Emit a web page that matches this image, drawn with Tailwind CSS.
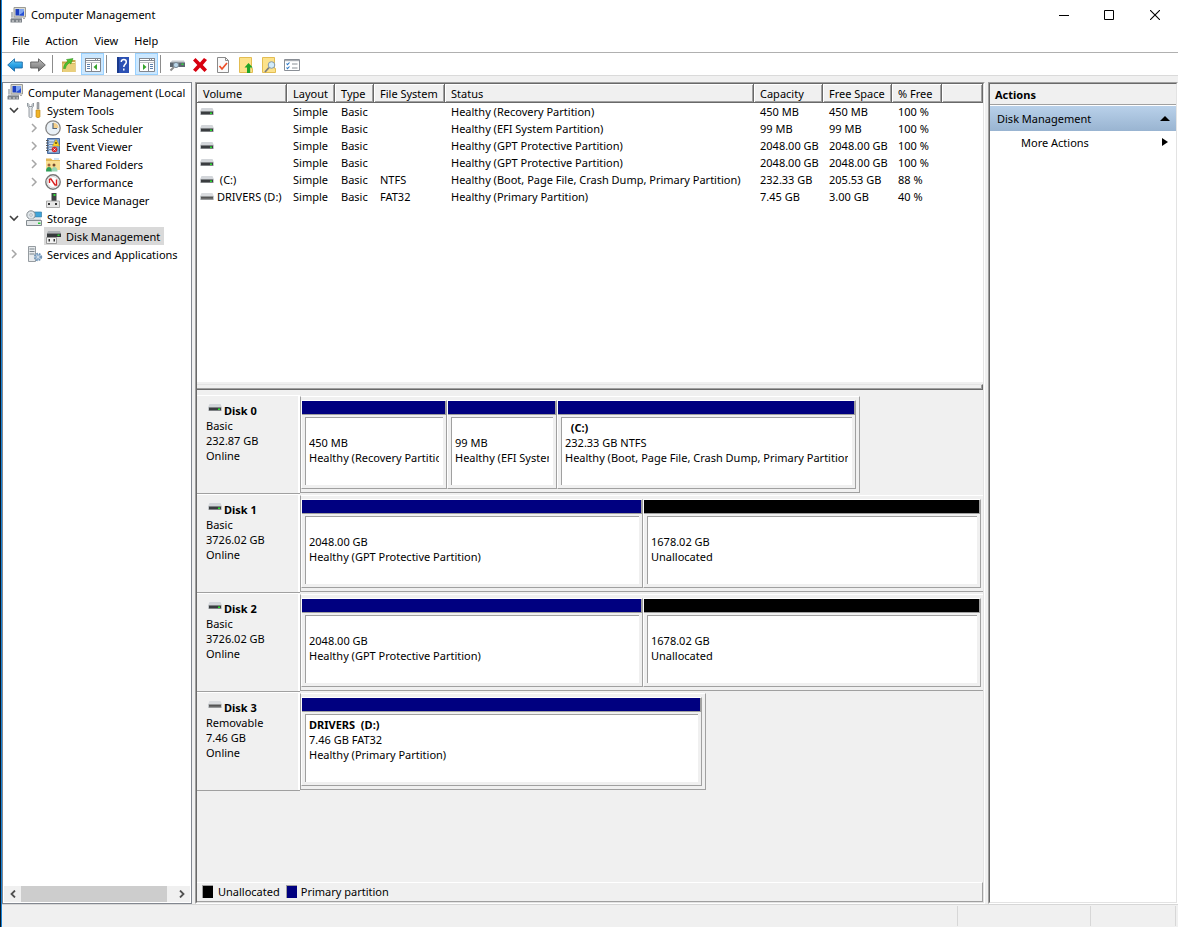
<!DOCTYPE html>
<html lang="en">
<head>
<meta charset="utf-8">
<meta name="viewport" content="width=device-width, initial-scale=1">
<title>Computer Management</title>
<script src="https://cdn.jsdelivr.net/npm/@tailwindcss/browser@4"></script>
</head>
<body class="h-screen overflow-hidden border-l border-[#0a1622] bg-[#f0f0f0] font-['Noto_Sans','Open_Sans',sans-serif] text-[11px] leading-[15px] text-black">

<svg class="absolute h-0 w-0" aria-hidden="true">
  <defs>
    <linearGradient id="blueArrow" x1="0" y1="0" x2="0" y2="1"><stop offset="0" stop-color="#7fd4f7"/><stop offset=".5" stop-color="#2ba3e6"/><stop offset="1" stop-color="#1879c4"/></linearGradient>
    <linearGradient id="greyArrow" x1="0" y1="0" x2="0" y2="1"><stop offset="0" stop-color="#c0c0c0"/><stop offset="1" stop-color="#6e6e6e"/></linearGradient>
    <symbol id="computer" viewBox="0 0 16 16">
      <path d="M4 .5h11.500v9.500H4z" fill="#dcdcd2" stroke="#9a9a94"/><path d="M5.500 2h8.500v6.500H5.500z" fill="#1c3fc0"/><path d="M9 2h5v3.500L9 8z" fill="#7fa4f0"/><path d="M10 8.500 14 4v4.500z" fill="#2450d8"/>
      <path d="M1 5h2v5H1z" fill="#b8bcc0"/><path d="M1 10.500h11v2H1z" fill="#a4a9ae"/><path d="M.5 12h11.500v3.500H.5z" fill="#7c8288"/><path d="M2 13.500h2v1H2zm4 0h2v1H6zm3.500 0h1.500v1H9.500z" fill="#e4e4e4"/><path d="M13 11h2v1h-2z" fill="#aaa"/>
    </symbol>
    <symbol id="drive" viewBox="0 0 14 8"><path d="M1.500 0h11L14 3.500H0z" fill="#d3d6da"/><path d="M0 3h14v4H0z" fill="#c3c7ca"/><path d="M1 3.500h12v3H1z" fill="#3a3d40"/><path d="M10 4.500h2v1.500h-2z" fill="#27e02d"/></symbol>
    <symbol id="removable" viewBox="0 0 14 8"><path d="M1.500 0h11L14 3.500H0z" fill="#dadcdf"/><path d="M0 3h14v4H0z" fill="#c3c7ca"/><path d="M1 3.500h12v3H1z" fill="#6b6b6b"/><path d="M1 4h12v1H1z" fill="#555"/></symbol>
    <symbol id="chevR" viewBox="0 0 8 10"><path d="M2 1l4 4-4 4" fill="none" stroke="#a6a6a6" stroke-width="1.500"/></symbol>
    <symbol id="chevD" viewBox="0 0 10 8"><path d="M1 2l4 4 4-4" fill="none" stroke="#404040" stroke-width="1.600"/></symbol>
  </defs>
</svg>

<div class="flex h-full flex-col border-l border-[#1883d7]">

  <header class="flex h-[29px] shrink-0 items-center bg-white">
    <svg class="ml-2 h-4 w-4"><use href="#computer"/></svg>
    <h1 class="ml-[5px] flex-1">Computer Management</h1>
    <button aria-label="Minimize" class="flex h-full w-11 items-center justify-center"><svg class="h-[10px] w-[10px]" viewBox="0 0 10 10"><path d="M0 5h10v1H0z"/></svg></button>
    <button aria-label="Maximize" class="flex h-full w-[46px] items-center justify-center"><svg class="h-[10px] w-[10px]" viewBox="0 0 10 10"><path d="M.5.5h9v9h-9z" fill="none" stroke="#000"/></svg></button>
    <button aria-label="Close" class="flex h-full w-[46px] items-center justify-center"><svg class="h-[10px] w-[10px]" viewBox="0 0 10 10"><path d="M0 0l10 10M10 0 0 10" fill="none" stroke="#000" stroke-width="1.100"/></svg></button>
  </header>

  <nav class="flex h-6 shrink-0 items-center gap-4 border-b border-[#b0b0b0] bg-white pl-[10px]" aria-label="Menu bar">
    <button>File</button><button>Action</button><button>View</button><button>Help</button>
  </nav>

  <div role="toolbar" aria-label="Tools" class="flex h-[23px] shrink-0 items-center border-b border-[#dadada] bg-white pl-px">
    <button aria-label="Back" class="flex h-[22px] w-[23px] items-center justify-center pt-px"><svg class="h-4 w-4" viewBox="0 0 16 16"><path d="M.7 8 7.500 1.800V5h7.800v6H7.500v3.200z" fill="url(#blueArrow)" stroke="#1b6ca8" stroke-width=".9"/></svg></button>
    <button aria-label="Forward" class="flex h-[22px] w-[23px] items-center justify-center pt-px"><svg class="h-4 w-4" viewBox="0 0 16 16"><path d="M15.300 8 8.500 1.800V5H.7v6h7.800v3.200z" fill="url(#greyArrow)" stroke="#5c5c5c" stroke-width=".9"/></svg></button>
    <span class="ml-[3px] mr-[4px] h-[18px] w-px bg-[#8c8c8c]"></span>
    <button aria-label="Up one level" class="flex h-[22px] w-[23px] items-center justify-center pt-px"><svg class="h-4 w-4" viewBox="0 0 16 16"><path d="M1 4.500h4.500L7 3h7.500v12H1z" fill="#c9a54a"/><path d="M1.500 6.500h13V15h-13z" fill="#e9cf7c"/><path d="M10 5h4v1h-4z" fill="#fff3c0"/><path d="M2.500 11.500c.3-3.500 2-6 4.500-7L5.500 2.500 12 1.500 9.800 7 8.500 5.800C6.500 7 5 8.800 4.500 11.500z" fill="#4cc22e" stroke="#2d8a1a" stroke-width=".5"/></svg></button>
    <button aria-label="Show or hide console tree" aria-pressed="true" class="ml-px flex h-[22px] w-[23px] items-center justify-center border border-[#99d1ff] bg-[#cce8ff] pt-[2px]"><svg class="h-4 w-4 shrink-0" viewBox="0 0 16 16"><path d="M.5 1.500h15v13H.5z" fill="#fff" stroke="#82878f"/><path d="M0 1h16v4.500H0z" fill="#82878f"/><path d="M1 2h9v1H1zm10 0h1v1h-1zm2 0h2v1h-2zM1 4h14v1H1z" fill="#fff"/><path d="M6.500 6v8.500" stroke="#82878f"/><path d="M2 7h3v1H2zm0 2h3v1H2zm0 2h3v1H2z" fill="#5a7fae"/><path d="M8.500 10 12 7v6z" fill="#35a52c"/></svg></button>
    <span class="ml-[2px] mr-[4px] h-[18px] w-px bg-[#8c8c8c]"></span>
    <button aria-label="Help" class="flex h-[22px] w-[23px] items-center justify-center pt-px"><svg class="h-4 w-4" viewBox="0 0 16 16"><path d="M2 0h12v16H2z" fill="#2c51b4"/><path d="M2 0h2v16H2z" fill="#193a8c"/><path d="M6.300 5c0-1.800 1-2.500 2.500-2.500S11.300 3.500 11.300 5c0 2.200-2.500 2.500-2.500 5M8.800 11.500v2" fill="none" stroke="#fff" stroke-width="1.500"/></svg></button>
    <button aria-label="Show or hide action pane" aria-pressed="true" class="ml-px flex h-[22px] w-[23px] items-center justify-center border border-[#99d1ff] bg-[#cce8ff] pt-[2px]"><svg class="h-4 w-4 shrink-0" viewBox="0 0 16 16"><path d="M.5 1.500h15v13H.5z" fill="#fff" stroke="#82878f"/><path d="M0 1h16v4.500H0z" fill="#82878f"/><path d="M1 2h9v1H1zm10 0h1v1h-1zm2 0h2v1h-2zM1 4h14v1H1z" fill="#fff"/><path d="M9.500 6v8.500" stroke="#82878f"/><path d="M11 7h3v1h-3zm0 2h3v1h-3zm0 2h3v1h-3z" fill="#5a7fae"/><path d="M7.500 10 4 7v6z" fill="#35a52c"/></svg></button>
    <span class="ml-[2px] mr-[4px] h-[18px] w-px bg-[#8c8c8c]"></span>
    <button aria-label="Rescan disks" class="flex h-[22px] w-[23px] items-center justify-center pt-px"><svg class="h-4 w-4" viewBox="0 0 16 16"><path d="M3 3.500h12L16 6H1z" fill="#c5cacf"/><path d="M1 5.500h15V10H1z" fill="#5c6670"/><path d="M12.500 6.500h2V8h-2z" fill="#2ed83a"/><path d="M5 10 1.500 13.500" stroke="#8e8e8e" stroke-width="2"/><circle cx="7" cy="8" r="2.600" fill="#b9d6ea" stroke="#7d8c98"/></svg></button>
    <button aria-label="Delete" class="flex h-[22px] w-[23px] items-center justify-center pt-px"><svg class="h-4 w-4" viewBox="0 0 16 16"><path d="M3.500 1 8 5.500 12 1l3 2-4.200 5L15 12.500 12.500 15 8 10.500 3.800 15 1 12.800 5.300 8 1 3.500z" fill="#d8000f"/></svg></button>
    <button aria-label="Properties" class="flex h-[22px] w-[23px] items-center justify-center pt-px"><svg class="h-4 w-4" viewBox="0 0 16 16"><path d="M2.500.5h8l3 3v12h-11z" fill="#fafafa" stroke="#8a8a8a"/><path d="M10.500.5v3h3" fill="none" stroke="#8a8a8a"/><path d="M4.500 9 7 12l5-6" fill="none" stroke="#ee4f27" stroke-width="1.700"/></svg></button>
    <button aria-label="Open parent" class="flex h-[22px] w-[23px] items-center justify-center pt-px"><svg class="h-4 w-4" viewBox="0 0 16 16"><path d="M1.500.5h12v11h1v4h-13z" fill="#fce28b" stroke="#e3bd52"/><path d="M10.500 6l4.200 4.500h-2.500V16H9v-5.500H6.500z" fill="#1fa527"/></svg></button>
    <button aria-label="Search" class="flex h-[22px] w-[23px] items-center justify-center pt-px"><svg class="h-4 w-4" viewBox="0 0 16 16"><path d="M1.500.5h12v11h1v4h-13z" fill="#fce28b" stroke="#e3bd52"/><path d="M8 10.500 4 15" stroke="#7c7c7c" stroke-width="1.800"/><circle cx="10.500" cy="8" r="3.300" fill="#d2ecfb" stroke="#8599a8"/></svg></button>
    <button aria-label="View options" class="flex h-[22px] w-[23px] items-center justify-center pt-px"><svg class="h-4 w-4" viewBox="0 0 16 16"><path d="M.5 2.500h15v11H.5z" fill="#fff" stroke="#8a8f96"/><path d="M1 3h14v1.200H1z" fill="#a9adb3"/><path d="M2.500 6.500l1 1.200 2-2.200m-3 5 1 1.200 2-2.200" fill="none" stroke="#2b77c5" stroke-width="1.100"/><path d="M8 6.500h5.500v1H8zm0 4h5.500v1H8z" fill="#8a8f96"/></svg></button>
  </div>

  <main class="flex min-h-0 flex-1 gap-[3px] pt-[6px]">

    <aside class="flex w-[190px] shrink-0 flex-col overflow-hidden border border-[#828790] bg-white">
      <ul class="flex-1 whitespace-nowrap">
        <li class="flex h-[18px] items-center pl-1"><svg class="h-4 w-4 shrink-0"><use href="#computer"/></svg><span class="ml-[5px] overflow-hidden">Computer Management (Local</span></li>
        <li class="flex h-[18px] items-center pl-[6px]"><svg class="h-2 w-[10px]"><use href="#chevD"/></svg>
          <svg class="ml-[7px] h-4 w-4" viewBox="0 0 16 16"><path d="M1.500 1v3L3 6v8.500c0 1.500 3 1.500 3 0V6l1.500-2V1L6 2.500v2H3v-2z" fill="#e4e7ea" stroke="#7e868d" stroke-width=".8"/><path d="M11 .5h2V7h-2z" fill="#a8adb2" stroke="#777" stroke-width=".5"/><path d="M10 8h4v6.500c0 1.500-4 1.500-4 0z" fill="#f0b429" stroke="#b87f10" stroke-width=".6"/></svg><span class="ml-[5px]">System Tools</span></li>
        <li class="flex h-[18px] items-center pl-[27px]"><svg class="h-[10px] w-2"><use href="#chevR"/></svg>
          <svg class="ml-[7px] h-4 w-4" viewBox="0 0 16 16"><circle cx="8" cy="8" r="7.200" fill="#e9f0f6" stroke="#858585" stroke-width="1.300"/><path d="M8 8V2.500A5.500 5.500 0 0 1 13.500 8z" fill="#f4cf8a"/><path d="M8 3v5.500h4" fill="none" stroke="#56697c" stroke-width="1.200"/></svg><span class="ml-[5px]">Task Scheduler</span></li>
        <li class="flex h-[18px] items-center pl-[27px]"><svg class="h-[10px] w-2"><use href="#chevR"/></svg>
          <svg class="ml-[7px] h-4 w-4" viewBox="0 0 16 16"><path d="M2.500.5h12v15h-12z" fill="#7ea2cf" stroke="#4a6b9c"/><path d="M4 2h5v12H4z" fill="#c8daf0"/><path d="M4 4h5M4 6.500h5M4 9h5M4 11.500h4" stroke="#5577a8" stroke-width=".8"/><path d="M1 2.500h2.500M1 5h2.500M1 7.500h2.500M1 10h2.500M1 12.500h2.500" stroke="#555"/><path d="M11 1.500 14.500 8h-7z" fill="#ffd52e" stroke="#c79a00" stroke-width=".5"/><path d="M11 4v2" stroke="#000"/><circle cx="9.500" cy="11.500" r="2.800" fill="#d8272c"/><path d="M8.500 10.500l2 2m0-2-2 2" stroke="#fff" stroke-width=".8"/></svg><span class="ml-[5px]">Event Viewer</span></li>
        <li class="flex h-[18px] items-center pl-[27px]"><svg class="h-[10px] w-2"><use href="#chevR"/></svg>
          <svg class="ml-[7px] h-4 w-4" viewBox="0 0 16 16"><path d="M1 2.500h5L7.500 4H15v10H1z" fill="#e2b655"/><path d="M1 5h14v9H1z" fill="#f9df92"/><path d="M9 2h5v2H9z" fill="#cfe3f5"/><circle cx="4" cy="9" r="1.500" fill="#a2643c"/><circle cx="9" cy="9" r="1.500" fill="#754c30"/><path d="M1 15.500c0-3 1-4.500 3-4.500s3 1.500 3 4.500z" fill="#2f9e59"/><path d="M6.500 15.500c0-3 1-4.500 3-4.500s3 1.500 3 4.500z" fill="#9bd6b4"/></svg><span class="ml-[5px]">Shared Folders</span></li>
        <li class="flex h-[18px] items-center pl-[27px]"><svg class="h-[10px] w-2"><use href="#chevR"/></svg>
          <svg class="ml-[7px] h-4 w-4" viewBox="0 0 16 16"><circle cx="8" cy="8" r="7.200" fill="#fff" stroke="#777" stroke-width="1.400"/><circle cx="8" cy="8" r="5.500" fill="none" stroke="#c9c9c9" stroke-width=".8"/><path d="M4.500 5v4M4.500 5h1.500l4 6h1.500V5.500" fill="none" stroke="#d92121" stroke-width="1.400"/></svg><span class="ml-[5px]">Performance</span></li>
        <li class="flex h-[18px] items-center pl-[42px]">
          <svg class="h-4 w-4" viewBox="0 0 16 16"><path d="M6.500 1h5v9h-5z" fill="#3f4245"/><path d="M8.500 2h2v2h-2z" fill="#30d838"/><path d="M1.500 9h13v6.500h-13z" fill="#e6e6e6" stroke="#999" stroke-width=".8"/><path d="M3 11h2v2H3zm7 0h2v2h-2z" fill="#333"/></svg><span class="ml-[5px]">Device Manager</span></li>
        <li class="flex h-[18px] items-center pl-[6px]"><svg class="h-2 w-[10px]"><use href="#chevD"/></svg>
          <svg class="ml-[7px] h-4 w-4" viewBox="0 0 16 16"><path d="M7.500 2h8v5h-8z" fill="#3fa4d8" stroke="#3b7ea6" stroke-width=".7"/><circle cx="5" cy="5" r="4.200" fill="#dfe5e9" stroke="#7a8288" stroke-width=".9"/><circle cx="5" cy="5" r="1.300" fill="#fff" stroke="#8a9298" stroke-width=".6"/><path d="M3 8.500h12v3H3z" fill="#ccd1d5"/><path d="M.5 10.500h15v5H.5z" fill="#e3e6e8" stroke="#777f85" stroke-width=".9"/><path d="M12 12.500h2.500V14H12z" fill="#28cc38"/></svg><span class="ml-[5px]">Storage</span></li>
        <li class="flex h-[18px] items-center pl-[41px]" aria-selected="true"><span class="flex h-[18px] items-center bg-[#d9d9d9] pl-px pr-[4px]">
          <svg class="h-4 w-4" viewBox="0 0 16 16"><path d="M3 3h12l1 2.500H2z" fill="#aeb2b6"/><path d="M2 5.500h14v3.500H2z" fill="#36393c"/><path d="M12.500 6.500h2V8h-2z" fill="#2bdc35"/><path d="M1.500 9.500h10v6h-10z" fill="#f2f2f2" stroke="#888" stroke-width=".8"/><path d="M3.500 11h1.500v2.500H3.500zm5 0H10v2.500H8.500z" fill="#333"/></svg><span class="ml-[5px]">Disk Management</span></span></li>
        <li class="flex h-[18px] items-center pl-[7px]"><svg class="h-[10px] w-2"><use href="#chevR"/></svg>
          <svg class="ml-[9px] h-4 w-4" viewBox="0 0 16 16"><path d="M1.500.5h7v15h-7z" fill="#e8ebed" stroke="#8b9297" stroke-width=".9"/><path d="M2.500 3h5M2.500 5.500h5M2.500 8h5" stroke="#7b858c"/><circle cx="11" cy="11" r="3.200" fill="#bcd3e8" stroke="#6f93b5" stroke-width="2" stroke-dasharray="1.600 1"/><circle cx="11" cy="11" r="1.400" fill="#fff" stroke="#6f93b5" stroke-width=".7"/></svg><span class="ml-[4px]">Services and Applications</span></li>
      </ul>
      <div class="mx-px mb-px flex h-4 bg-[#f0f0f0]">
        <button aria-label="Scroll left" class="flex w-[17px] items-center justify-center"><svg class="h-2 w-[6px]" viewBox="0 0 6 8"><path d="M5 .5 1.500 4 5 7.500" fill="none" stroke="#505050" stroke-width="1.800"/></svg></button>
        <div class="flex-1"><div class="h-full w-[146px] max-w-full bg-[#cdcdcd]"></div></div>
        <button aria-label="Scroll right" class="flex w-[17px] items-center justify-center"><svg class="h-2 w-[6px]" viewBox="0 0 6 8"><path d="M1 .5 4.500 4 1 7.500" fill="none" stroke="#505050" stroke-width="1.800"/></svg></button>
      </div>
    </aside>

    <section class="flex min-w-0 flex-1 border border-[#a0a0a0] border-r-white border-b-white">
      <div class="flex min-w-0 flex-1 flex-col border border-[#696969] border-r-[#e3e3e3] border-b-[#e3e3e3]">

        <div class="h-[298px] shrink-0 overflow-hidden bg-white">
          <table class="w-full table-fixed border-separate border-spacing-0 whitespace-nowrap text-left">
            <thead>
              <tr class="h-[19px] bg-[#f0f0f0] *:border-b *:border-b-[#696969] *:border-r *:border-r-[#696969] *:py-0 *:pr-0 *:pl-[6px] *:font-normal *:shadow-[inset_1px_1px_0_#fff,inset_-1px_-1px_0_#a0a0a0]">
                <th class="w-[90px]">Volume</th><th class="w-12">Layout</th><th class="w-[39px]">Type</th><th class="w-[71px]">File System</th><th class="w-[309px]">Status</th><th class="w-[69px]">Capacity</th><th class="w-[69px]">Free Space</th><th class="w-[50px]">% Free</th><th></th>
              </tr>
            </thead>
            <tbody class="[&_td]:h-[17px] [&_td]:p-0 [&_td]:pl-[6px]">
              <tr><td><svg class="-ml-[3px] h-2 w-[14px]"><use href="#drive"/></svg></td><td>Simple</td><td>Basic</td><td></td><td>Healthy (Recovery Partition)</td><td>450 MB</td><td>450 MB</td><td>100 %</td><td></td></tr>
              <tr><td><svg class="-ml-[3px] h-2 w-[14px]"><use href="#drive"/></svg></td><td>Simple</td><td>Basic</td><td></td><td>Healthy (EFI System Partition)</td><td>99 MB</td><td>99 MB</td><td>100 %</td><td></td></tr>
              <tr><td><svg class="-ml-[3px] h-2 w-[14px]"><use href="#drive"/></svg></td><td>Simple</td><td>Basic</td><td></td><td>Healthy (GPT Protective Partition)</td><td>2048.00 GB</td><td>2048.00 GB</td><td>100 %</td><td></td></tr>
              <tr><td><svg class="-ml-[3px] h-2 w-[14px]"><use href="#drive"/></svg></td><td>Simple</td><td>Basic</td><td></td><td>Healthy (GPT Protective Partition)</td><td>2048.00 GB</td><td>2048.00 GB</td><td>100 %</td><td></td></tr>
              <tr><td><div class="-ml-[3px] flex items-center gap-[3px]"><svg class="h-2 w-[14px]"><use href="#drive"/></svg><span>&nbsp;(C:)</span></div></td><td>Simple</td><td>Basic</td><td>NTFS</td><td>Healthy (Boot, Page File, Crash Dump, Primary Partition)</td><td>232.33 GB</td><td>205.53 GB</td><td>88 %</td><td></td></tr>
              <tr><td><div class="-ml-[3px] flex items-center gap-[3px]"><svg class="h-2 w-[14px]"><use href="#removable"/></svg><span>DRIVERS (D:)</span></div></td><td>Simple</td><td>Basic</td><td>FAT32</td><td>Healthy (Primary Partition)</td><td>7.45 GB</td><td>3.00 GB</td><td>40 %</td><td></td></tr>
            </tbody>
          </table>
        </div>
        <div class="flex h-2 shrink-0 flex-col justify-end"><div class="h-[6px] border-t border-r border-b border-t-[#e3e3e3] border-r-[#696969] border-b-[#696969] shadow-[inset_-1px_-1px_0_#a0a0a0]"></div></div>

        <div class="min-h-0 flex-1 overflow-hidden pt-[5px] whitespace-nowrap">
          <!-- Disk 0 -->
          <div class="flex h-[99px]">
            <div class="w-[103px] shrink-0 border-t border-b border-t-white border-b-[#a0a0a0] pt-[7px] pl-[9px] shadow-[inset_-2px_0_0_#fff]">
              <div class="flex gap-[2px] pl-[2px]"><svg class="mt-px h-2 w-[14px]"><use href="#drive"/></svg><b>Disk 0</b></div>
              <div>Basic</div><div>232.87 GB</div><div>Online</div>
            </div>
            <div class="mt-px mb-px flex w-[560px] max-w-full border border-[#a0a0a0] border-t-white pt-[3px] pr-[3px] pb-[3px]">
              <div class="flex min-w-0 flex-[144] flex-col border border-[#a0a0a0] border-t-white border-l-white">
                <div class="h-[14px] border-b border-[#a0a0a0] bg-[#000080] shadow-[inset_-1px_0_0_#a0a0a0]"></div>
                <div class="mx-[3px] mt-[2px] mb-[3px] flex-1 overflow-hidden border-t border-l border-[#a0a0a0] bg-white pt-[2px] pl-[3px]"><div class="mr-1 overflow-hidden"><b class="block h-[15px]"></b><div>450 MB</div><div>Healthy (Recovery Partition)</div></div></div>
              </div>
              <div class="flex min-w-0 flex-[108] flex-col border border-[#a0a0a0] border-t-white border-l-white">
                <div class="h-[14px] border-b border-[#a0a0a0] bg-[#000080] shadow-[inset_-1px_0_0_#a0a0a0]"></div>
                <div class="mx-[3px] mt-[2px] mb-[3px] flex-1 overflow-hidden border-t border-l border-[#a0a0a0] bg-white pt-[2px] pl-[3px]"><div class="mr-1 overflow-hidden"><b class="block h-[15px]"></b><div>99 MB</div><div>Healthy (EFI System Partition)</div></div></div>
              </div>
              <div class="flex min-w-0 flex-[297] flex-col border border-[#a0a0a0] border-t-white border-l-white">
                <div class="h-[14px] border-b border-[#a0a0a0] bg-[#000080] shadow-[inset_-1px_0_0_#a0a0a0]"></div>
                <div class="mx-[3px] mt-[2px] mb-[3px] flex-1 overflow-hidden border-t border-l border-[#a0a0a0] bg-white pt-[2px] pl-[3px]"><div class="mr-1 overflow-hidden"><b class="block h-[15px]">&nbsp;&nbsp;(C:)</b><div>232.33 GB NTFS</div><div>Healthy (Boot, Page File, Crash Dump, Primary Partition)</div></div></div>
              </div>
            </div>
          </div>
          <!-- Disk 1 -->
          <div class="flex h-[99px]">
            <div class="w-[103px] shrink-0 border-t border-b border-t-white border-b-[#a0a0a0] pt-[7px] pl-[9px] shadow-[inset_-2px_0_0_#fff]">
              <div class="flex gap-[2px] pl-[2px]"><svg class="mt-px h-2 w-[14px]"><use href="#drive"/></svg><b>Disk 1</b></div>
              <div>Basic</div><div>3726.02 GB</div><div>Online</div>
            </div>
            <div class="mt-px mb-px flex min-w-0 flex-1 border-t border-b border-l border-[#a0a0a0] border-t-white pt-[3px] pr-[2px] pb-[3px]">
              <div class="flex min-w-0 flex-[340] flex-col border border-[#a0a0a0] border-t-white border-l-white">
                <div class="h-[14px] border-b border-[#a0a0a0] bg-[#000080] shadow-[inset_-1px_0_0_#a0a0a0]"></div>
                <div class="mx-[3px] mt-[2px] mb-[3px] flex-1 overflow-hidden border-t border-l border-[#a0a0a0] bg-white pt-[2px] pl-[3px]"><div class="mr-1 overflow-hidden"><b class="block h-[15px]"></b><div>2048.00 GB</div><div>Healthy (GPT Protective Partition)</div></div></div>
              </div>
              <div class="flex min-w-0 flex-[336] flex-col border border-[#a0a0a0] border-t-white border-l-white">
                <div class="h-[14px] border-b border-[#a0a0a0] bg-black shadow-[inset_-1px_0_0_#a0a0a0]"></div>
                <div class="mx-[3px] mt-[2px] mb-[3px] flex-1 overflow-hidden border-t border-l border-[#a0a0a0] bg-white pt-[2px] pl-[3px]"><div class="mr-1 overflow-hidden"><b class="block h-[15px]"></b><div>1678.02 GB</div><div>Unallocated</div></div></div>
              </div>
            </div>
          </div>
          <!-- Disk 2 -->
          <div class="flex h-[99px]">
            <div class="w-[103px] shrink-0 border-t border-b border-t-white border-b-[#a0a0a0] pt-[7px] pl-[9px] shadow-[inset_-2px_0_0_#fff]">
              <div class="flex gap-[2px] pl-[2px]"><svg class="mt-px h-2 w-[14px]"><use href="#drive"/></svg><b>Disk 2</b></div>
              <div>Basic</div><div>3726.02 GB</div><div>Online</div>
            </div>
            <div class="mt-px mb-px flex min-w-0 flex-1 border-t border-b border-l border-[#a0a0a0] border-t-white pt-[3px] pr-[2px] pb-[3px]">
              <div class="flex min-w-0 flex-[340] flex-col border border-[#a0a0a0] border-t-white border-l-white">
                <div class="h-[14px] border-b border-[#a0a0a0] bg-[#000080] shadow-[inset_-1px_0_0_#a0a0a0]"></div>
                <div class="mx-[3px] mt-[2px] mb-[3px] flex-1 overflow-hidden border-t border-l border-[#a0a0a0] bg-white pt-[2px] pl-[3px]"><div class="mr-1 overflow-hidden"><b class="block h-[15px]"></b><div>2048.00 GB</div><div>Healthy (GPT Protective Partition)</div></div></div>
              </div>
              <div class="flex min-w-0 flex-[336] flex-col border border-[#a0a0a0] border-t-white border-l-white">
                <div class="h-[14px] border-b border-[#a0a0a0] bg-black shadow-[inset_-1px_0_0_#a0a0a0]"></div>
                <div class="mx-[3px] mt-[2px] mb-[3px] flex-1 overflow-hidden border-t border-l border-[#a0a0a0] bg-white pt-[2px] pl-[3px]"><div class="mr-1 overflow-hidden"><b class="block h-[15px]"></b><div>1678.02 GB</div><div>Unallocated</div></div></div>
              </div>
            </div>
          </div>
          <!-- Disk 3 -->
          <div class="flex h-[99px]">
            <div class="w-[103px] shrink-0 border-t border-b border-t-white border-b-[#a0a0a0] pt-[7px] pl-[9px] shadow-[inset_-2px_0_0_#fff]">
              <div class="flex gap-[2px] pl-[2px]"><svg class="mt-px h-2 w-[14px]"><use href="#removable"/></svg><b>Disk 3</b></div>
              <div>Removable</div><div>7.46 GB</div><div>Online</div>
            </div>
            <div class="mt-px mb-px flex w-[406px] max-w-full border border-[#a0a0a0] border-t-white pt-[3px] pr-[3px] pb-[3px]">
              <div class="flex min-w-0 flex-1 flex-col border border-[#a0a0a0] border-t-white border-l-white">
                <div class="h-[14px] border-b border-[#a0a0a0] bg-[#000080] shadow-[inset_-1px_0_0_#a0a0a0]"></div>
                <div class="mx-[3px] mt-[2px] mb-[3px] flex-1 overflow-hidden border-t border-l border-[#a0a0a0] bg-white pt-[2px] pl-[3px]"><div class="mr-1 overflow-hidden"><b class="block h-[15px]">DRIVERS&nbsp; (D:)</b><div>7.46 GB FAT32</div><div>Healthy (Primary Partition)</div></div></div>
              </div>
            </div>
          </div>
        </div>

        <div class="flex h-5 shrink-0 items-start border-t border-r border-b border-t-white border-r-[#a0a0a0] border-b-[#a0a0a0] pt-[2px] pl-[5px] leading-[13px]">
          <span class="h-[13px] w-[11px] border-t border-l border-[#a0a0a0] bg-black"></span><span class="ml-[5px]">Unallocated</span>
          <span class="ml-[6px] h-[13px] w-[11px] border-t border-l border-[#a0a0a0] bg-[#000080]"></span><span class="ml-[4px]">Primary partition</span>
        </div>
      </div>
    </section>

    <aside class="flex w-[190px] shrink-0 border border-[#a0a0a0] border-r-white border-b-white">
      <div class="min-w-0 flex-1 border border-[#696969] border-r-[#e3e3e3] border-b-[#e3e3e3] bg-white">
        <h2 class="flex h-[21px] items-center border-b border-[#a0a0a0] bg-[#f0f0f0] pl-[5px] font-bold">Actions</h2>
        <button class="mt-px flex h-[25px] w-full items-center justify-between bg-linear-to-b from-[#b9d1ea] to-[#99b4d1] pr-[6px] pl-[7px]"><span>Disk Management</span><svg class="h-[5px] w-[10px]" viewBox="0 0 10 5"><path d="M5 0l5 5H0z"/></svg></button>
        <button class="flex h-[22px] w-full items-center justify-between pr-2 pl-[31px]"><span>More Actions</span><svg class="h-2 w-[6px]" viewBox="0 0 6 8"><path d="M0 0l6 4-6 4z"/></svg></button>
      </div>
    </aside>
  </main>

  <footer class="flex h-[23px] shrink-0 border-t border-[#d7d7d7] py-px pr-[2px]">
    <div class="flex-1 border-r border-[#d7d7d7]"></div><div class="w-[133px] border-r border-[#d7d7d7]"></div><div class="w-[85px] border-r border-[#d7d7d7]"></div>
  </footer>
</div>
</body>
</html>
